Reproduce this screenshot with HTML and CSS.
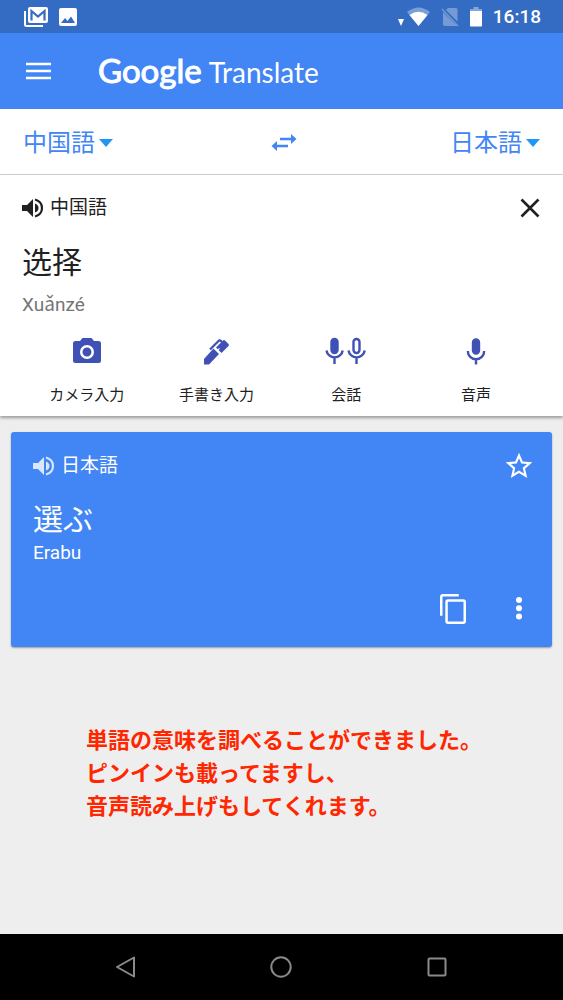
FILE: index.html
```html
<!DOCTYPE html>
<html lang="ja">
<head>
<meta charset="utf-8">
<meta name="viewport" content="width=device-width, initial-scale=1">
<title>Google Translate</title>
<link rel="stylesheet" href="styles.css">
</head>
<body>
<div class="status-bar">
  <div class="status-group">
    <svg width="24" height="20" viewBox="0 0 24 20" aria-hidden="true"><path d="M1 4v13.5q0 1.500 1.500 1.500H19" fill="none" stroke="#fff" stroke-width="2"/><rect x="4" y="0" width="20" height="16" rx="2" fill="#fff"/><path d="M7.500 13.500V4l6.500 5.500L20.500 4v9.500" fill="none" stroke="#346bc3" stroke-width="2.200"/></svg>
    <svg width="18" height="18" viewBox="0 0 18 18" aria-hidden="true"><rect width="18" height="18" rx="2" fill="#fff"/><path d="M2 15l4-5 2.500 3 3.500-4.500L16 15z" fill="#346bc3"/></svg>
  </div>
  <div class="status-group status-right">
    <svg width="32" height="20" viewBox="0 0 32 20" aria-hidden="true"><path d="M0 12h6l-3 7z" fill="#fff"/><path d="M9 5Q20.500-4 32 5L20.500 19z" fill="#fff" opacity=".35"/><path d="M11.500 8q9-6.500 18 0l-9 11z" fill="#fff"/></svg>
    <svg class="no-sim" width="18" height="20" viewBox="0 0 18 20" aria-hidden="true"><path d="M7 1h8q1.500 0 1.500 1.500V14.500L5 3zM2 5l14 14H4q-2 0-2-2z" fill="#fff" opacity=".32"/><path d="M1 2l16 17" stroke="#fff" stroke-width="1.500" opacity=".3"/></svg>
    <svg width="12" height="20" viewBox="0 0 12 20" aria-hidden="true"><path d="M3.500 0h5v2H12v2H0V2h3.500z" fill="#fff" opacity=".4"/><path d="M0 4h12v14.500q0 1-1 1H1q-1 0-1-1z" fill="#fff"/></svg>
    <time class="clock">16:18</time>
  </div>
</div>

<header class="app-bar">
  <button class="icon-button" aria-label="メニュー"><svg width="25" height="18" viewBox="0 0 25 18"><path d="M0 2h25M0 9h25M0 16h25" stroke="#fff" stroke-width="2.400"/></svg></button>
  <h1 class="brand"><span class="brand-google">Google</span><span class="brand-product">Translate</span></h1>
</header>

<div class="language-bar">
  <label class="language">
    <select class="language-select" aria-label="翻訳元の言語"><option>中国語</option></select>
    <svg width="14" height="8" viewBox="0 0 14 8" aria-hidden="true"><path d="M0 0h14L7 8z" fill="#2196f3"/></svg>
  </label>
  <button class="icon-button" aria-label="言語を入れ替える"><svg width="30" height="18" viewBox="-4 0 30 18"><path d="M9 5h12M5 12h12" stroke="#4285f4" stroke-width="2.400"/><path d="M20 0l5.500 5L20 10zM6 7l-5.500 5L6 17z" fill="#4285f4"/></svg></button>
  <label class="language language-target">
    <select class="language-select" aria-label="翻訳先の言語"><option>日本語</option></select>
    <svg width="14" height="8" viewBox="0 0 14 8" aria-hidden="true"><path d="M0 0h14L7 8z" fill="#2196f3"/></svg>
  </label>
</div>

<main class="content">
  <section class="source">
    <div class="panel-head">
      <button class="speak"><svg width="22" height="20" viewBox="0 0 22 20" aria-hidden="true"><path d="M0 7h5l6-6v18l-6-6H0z" fill="currentColor"/><path d="M13 5.500q3.500 1.500 3.500 4.500T13 14.500z" fill="currentColor"/><path d="M13 1.500q7 2 7 8.500t-7 8.500" fill="none" stroke="currentColor" stroke-width="2.200"/></svg>中国語</button>
      <button class="icon-button" aria-label="クリア"><svg width="20" height="20" viewBox="0 0 20 20"><path d="M1.500 1.500l17 17M18.500 1.500l-17 17" stroke="#212121" stroke-width="2.600"/></svg></button>
    </div>
    <p class="phrase" lang="zh-Hans">选择</p>
    <p class="reading">Xuǎnzé</p>
    <div class="tools">
      <button class="tool"><svg width="28" height="28" viewBox="0 0 28 28" aria-hidden="true"><path fill-rule="evenodd" d="M9.500 1h9L21 4h4.500Q28 4 28 6.500v17q0 2.500-2.500 2.500h-23Q0 26 0 23.500v-17Q0 4 2.500 4H7zM14 8a7 7 0 100 14 7 7 0 000-14zm0 2.500a4.500 4.500 0 110 9 4.500 4.500 0 010-9z" fill="#3f51b5"/></svg>カメラ入力</button>
      <button class="tool"><svg width="28" height="28" viewBox="0 0 28 28" aria-hidden="true"><path d="M10.500 11.500l5.500 5.500L6 27.500H1V22z" fill="#3f51b5"/><path d="M14.500 9L20 3.500q1-1 2 0L25.500 7q1 1 0 2L18.500 16l-5.500-5.500z" fill="#3f51b5"/><path d="M7 12.500L15.500 4q1-1 2.500 0l1 1" fill="none" stroke="#3f51b5" stroke-width="2.200"/><path d="M11 10.800l5.600 5.600M14 13.800l2.500-2.500" stroke="#fff" stroke-width="1.100"/></svg>手書き入力</button>
      <button class="tool"><svg width="44" height="28" viewBox="0 0 44 28" aria-hidden="true"><g fill="none" stroke="#3f51b5" stroke-width="2.400"><rect x="7.500" y="2" width="6" height="14" rx="3" fill="#3f51b5"/><path d="M2.500 13.500a8.200 8.200 0 0016.200 0M10.500 21v6M24.500 13.500a8.200 8.200 0 0016.200 0M32.500 21v6"/><rect x="29.500" y="2" width="6" height="14" rx="3"/></g></svg>会話</button>
      <button class="tool"><svg width="20" height="28" viewBox="0 0 20 28" aria-hidden="true"><g fill="none" stroke="#3f51b5" stroke-width="2.400"><rect x="7" y="2.500" width="6" height="14" rx="3" fill="#3f51b5"/><path d="M1.800 14a8.200 8.200 0 0016.400 0M10 21.500v6"/></g></svg>音声</button>
    </div>
  </section>

  <section class="result">
    <div class="panel-head">
      <button class="speak"><svg width="22" height="20" viewBox="0 0 22 20" aria-hidden="true"><g opacity=".8"><path d="M0 7h5l6-6v18l-6-6H0z" fill="currentColor"/><path d="M13 5.500q3.500 1.500 3.500 4.500T13 14.500z" fill="currentColor"/><path d="M13 1.500q7 2 7 8.500t-7 8.500" fill="none" stroke="currentColor" stroke-width="2.200"/></g></svg>日本語</button>
      <button class="icon-button" aria-label="お気に入り"><svg width="32" height="32" viewBox="0 0 24 24"><path d="M22 9.240l-7.190-.62L12 2 9.190 8.630 2 9.240l5.460 4.730L5.820 21 12 17.270 18.180 21l-1.630-7.030L22 9.240zM12 15.400l-3.760 2.270 1-4.280-3.320-2.880 4.380-.38L12 6.100l1.710 4.040 4.380.38-3.320 2.880 1 4.280L12 15.400z" fill="#fff"/></svg></button>
    </div>
    <p class="phrase">選ぶ</p>
    <p class="reading">Erabu</p>
    <div class="actions">
      <button class="icon-button" aria-label="コピー"><svg width="26" height="30" viewBox="0 0 27 31"><path d="M1.300 22.500V3q0-1.700 1.700-1.700h16.500" fill="none" stroke="#fff" stroke-width="2.600"/><rect x="6.800" y="6.800" width="18.900" height="22.900" rx="1.500" fill="none" stroke="#fff" stroke-width="2.600"/></svg></button>
      <button class="icon-button" aria-label="その他"><svg width="32" height="24" viewBox="0 0 32 24"><g fill="#fff"><circle cx="16" cy="3" r="3"/><circle cx="16" cy="11.300" r="3"/><circle cx="16" cy="19.600" r="3"/></g></svg></button>
    </div>
  </section>

  <p class="note">単語の意味を調べることができました。<br>ピンインも載ってますし、<br>音声読み上げもしてくれます。</p>
</main>

<nav class="system-nav">
  <button class="icon-button" aria-label="戻る"><svg width="22" height="22" viewBox="0 0 22 22"><path d="M2 11L19 1.500v19z" fill="none" stroke="#8a8a8a" stroke-width="2" stroke-linejoin="round"/></svg></button>
  <button class="icon-button" aria-label="ホーム"><svg width="22" height="22" viewBox="0 0 22 22"><circle cx="11" cy="11" r="9.700" fill="none" stroke="#8a8a8a" stroke-width="2"/></svg></button>
  <button class="icon-button" aria-label="最近のアプリ"><svg width="22" height="22" viewBox="0 0 22 22"><rect x="2.500" y="2.500" width="17" height="17" rx="1" fill="none" stroke="#8a8a8a" stroke-width="2"/></svg></button>
</nav>
</body>
</html>
```
FILE: styles.css
```css
* {
  box-sizing: border-box;
}

body {
  display: flex;
  flex-direction: column;
  min-height: 100vh;
  margin: 0;
  background: #eee;
  color: #212121;
  font-family: Roboto, "Noto Sans CJK JP", sans-serif;
}

h1,
p {
  margin: 0;
}

svg {
  display: block;
  flex: none;
}

button,
select {
  margin: 0;
  padding: 0;
  border: 0;
  background: none;
  color: inherit;
  font: inherit;
  cursor: pointer;
}

.icon-button {
  display: flex;
  align-items: center;
  justify-content: center;
}

.status-bar {
  display: flex;
  align-items: center;
  justify-content: space-between;
  height: 33px;
  padding: 0 22px 0 24px;
  background: #346bc3;
  color: #fff;
}

.status-group {
  display: flex;
  align-items: center;
  gap: 11px;
}

.clock {
  font-size: 19px;
  font-weight: 500;
  line-height: 24px;
}

.app-bar {
  display: flex;
  align-items: center;
  gap: 47px;
  height: 76px;
  padding: 0 26px;
  background: #4285f4;
  color: #fff;
}

.brand {
  display: flex;
  align-items: baseline;
  gap: 7px;
  font-family: Lato, sans-serif;
  font-weight: 400;
  line-height: 36px;
}

.brand-google {
  font-size: 33px;
  -webkit-text-stroke: 1px currentColor;
}

.brand-product {
  font-size: 28px;
}

.language-bar {
  display: grid;
  grid-template-columns: 1fr auto 1fr;
  align-items: center;
  height: 66px;
  padding: 2px 23px 0;
  border-bottom: 1px solid #d0d0d0;
  background: #fff;
  color: #4285f4;
}

.language {
  display: flex;
  align-items: center;
  gap: 4px;
}

.language-target {
  justify-content: flex-end;
}

.language-select {
  appearance: none;
  font-size: 24px;
  line-height: 36px;
}

.content {
  flex: 1;
}

.source {
  padding: 19px 22px 8px;
  background: #fff;
  box-shadow: 0 2px 3px rgba(0, 0, 0, 0.35);
}

.panel-head {
  display: flex;
  align-items: center;
  justify-content: space-between;
  height: 28px;
}

.source .panel-head {
  padding-right: 1px;
}

.speak {
  display: flex;
  align-items: center;
  gap: 6px;
  font-size: 19px;
  line-height: 28px;
}

.phrase {
  margin-top: 20px;
  font-size: 30px;
  line-height: 40px;
}

.phrase:lang(zh) {
  margin-top: 18px;
  font-family: "Noto Sans CJK SC", sans-serif;
}

.reading {
  font-size: 19px;
  line-height: 28px;
}

.source .reading {
  margin-top: 11px;
  color: #757575;
}

.tools {
  display: grid;
  grid-template-columns: repeat(4, 1fr);
  margin-top: 18px;
}

.tool {
  display: flex;
  flex-direction: column;
  align-items: center;
  gap: 17px;
  font-size: 15px;
  line-height: 26px;
}

.result {
  margin: 16px 11px 0;
  padding: 20px 17px 23px 22px;
  border-radius: 3px;
  background: #4285f4;
  box-shadow: 0 1px 2px rgba(0, 0, 0, 0.35);
  color: #fff;
}

.result .reading {
  line-height: 26px;
}

.actions {
  display: flex;
  align-items: center;
  justify-content: flex-end;
  gap: 37px;
  margin-top: 28px;
}

.note {
  padding: 75px 22px 75px 86px;
  color: #ff2600;
  font-family: "Noto Sans CJK JP", sans-serif;
  font-size: 22px;
  font-weight: 700;
  line-height: 33px;
}

.system-nav {
  display: grid;
  grid-template-columns: repeat(3, 1fr);
  height: 66px;
  padding: 0 48px;
  background: #000;
}
```
